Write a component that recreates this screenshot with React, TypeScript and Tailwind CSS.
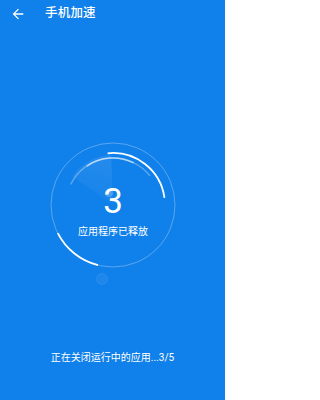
import React from "react"

const CX = 85
const CY = 85

function pt(r: number, deg: number) {
  const a = (deg * Math.PI) / 180
  return [CX + r * Math.sin(a), CY - r * Math.cos(a)]
}

function arc(r: number, from: number, to: number) {
  const [x1, y1] = pt(r, from)
  const [x2, y2] = pt(r, to)
  const sweep = ((to - from) % 360 + 360) % 360
  const large = sweep > 180 ? 1 : 0
  return `M${x1.toFixed(2)} ${y1.toFixed(2)} A${r} ${r} 0 ${large} 1 ${x2.toFixed(2)} ${y2.toFixed(2)}`
}

function wedge(r: number, from: number, to: number) {
  const [x1, y1] = pt(r, from)
  const [x2, y2] = pt(r, to)
  return `M${CX} ${CY} L${x1.toFixed(2)} ${y1.toFixed(2)} A${r} ${r} 0 0 1 ${x2.toFixed(2)} ${y2.toFixed(2)} Z`
}

function Dial() {
  return (
    <svg width="170" height="170" viewBox="0 0 170 170" className="block">
      <defs>
        <linearGradient id="sweep" x1="0" y1="1" x2="0.3" y2="0">
          <stop offset="0" stopColor="#fff" stopOpacity="0.01" />
          <stop offset="1" stopColor="#fff" stopOpacity="0.08" />
        </linearGradient>
      </defs>
      {/* radar wedge */}
      <path d={wedge(50, 305, 358)} fill="url(#sweep)" />
      {/* outer thin ring */}
      <circle cx={CX} cy={CY} r="62" fill="none" stroke="#fff" strokeOpacity="0.3" strokeWidth="1" />
      {/* inner faint arc */}
      <path d={arc(47, 296, 52)} fill="none" stroke="#fff" strokeOpacity="0.3" strokeWidth="1.5" />
      <path d={arc(47, 326, 26)} fill="none" stroke="#fff" strokeOpacity="0.55" strokeWidth="1.5" />
      {/* bright arcs */}
      <path d={arc(52, 354, 82)} fill="none" stroke="#fff" strokeWidth="1.8" />
      <path d={arc(62, 194, 243)} fill="none" stroke="#fff" strokeWidth="1.8" />
      {/* faint dots */}
      <circle cx={CX - 4} cy={CY - 12} r="4" fill="#fff" fillOpacity="0.22" />
      <circle cx={CX - 11} cy={CY + 74} r="5.5" fill="#fff" fillOpacity="0.06" stroke="#fff" strokeOpacity="0.08" />
    </svg>
  )
}

export default function App() {
  return (
    <div
      className="w-[225px] h-[400px] bg-[#1080ea] text-white flex flex-col items-center overflow-hidden"
      style={{ fontFamily: '"Roboto", "Noto Sans CJK SC", sans-serif' }}
    >
      {/* Header */}
      <div className="w-full h-[27px] flex items-center">
        <svg width="16" height="16" viewBox="0 0 24 24" className="ml-[9.5px]" fill="#fff">
          <path d="M20 11H7.83l5.59-5.59L12 4l-8 8 8 8 1.41-1.41L7.83 13H20v-2z" />
        </svg>
        <span className="ml-[19.5px] text-[12.5px] font-medium leading-none tracking-[0.2px]">手机加速</span>
      </div>

      {/* Dial */}
      <div className="relative mt-[93px] ml-[1px]">
        <Dial />
        <div className="absolute inset-x-0 top-[64px] flex flex-col items-center">
          <span className="text-[35px] font-normal leading-none">3</span>
          <span className="mt-[8px] text-[10px] leading-none">应用程序已释放</span>
        </div>
      </div>

      {/* Footer */}
      <div className="mt-[63px] text-[10px] leading-none">正在关闭运行中的应用...3/5</div>
    </div>
  )
}
